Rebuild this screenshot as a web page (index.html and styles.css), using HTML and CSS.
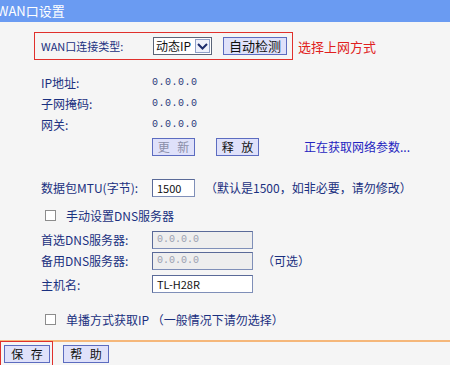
FILE: index.html
```html
<!DOCTYPE html>
<html lang="zh-CN">
<head>
  <meta charset="UTF-8" />
  <title>WAN口设置</title>
  <link rel="stylesheet" href="styles.css">
</head>
<body>
  <div class="title"><span>WAN口设置</span></div>

  <div class="form">
    <div class="type-line">
      <div class="type-box">
        <span class="label type-label">WAN口连接类型:</span>
        <span class="select">
          <span class="select-text">动态IP</span>
          <span class="select-arrow">
            <svg width="11" height="7" viewBox="0 0 11 7"><path d="M1 1 L5.5 5.5 L10 1" fill="none" stroke="#1c2c6c" stroke-width="2"/></svg>
          </span>
        </span>
        <button class="btn btn-detect">自动检测</button>
      </div>
      <span class="hint-red">选择上网方式</span>
    </div>

    <div class="rows">
      <div class="row"><span class="label">IP地址:</span><span class="ip">0.0.0.0</span></div>
      <div class="row"><span class="label">子网掩码:</span><span class="ip">0.0.0.0</span></div>
      <div class="row"><span class="label">网关:</span><span class="ip">0.0.0.0</span></div>
      <div class="row row-btns">
        <span></span>
        <div class="btn-group">
          <button class="btn btn-small disabled">更 新</button>
          <button class="btn btn-small">释 放</button>
          <span class="status">正在获取网络参数...</span>
        </div>
      </div>

      <div class="row row-mtu">
        <span class="label">数据包MTU(字节):</span>
        <div class="field">
          <span class="input input-mtu">1500</span>
          <span class="note">（默认是1500，如非必要，请勿修改）</span>
        </div>
      </div>

      <div class="check-row check-dns">
        <span class="checkbox"></span>
        <span class="label">手动设置DNS服务器</span>
      </div>

      <div class="row row-input">
        <span class="label">首选DNS服务器:</span>
        <span class="input input-wide off">0.0.0.0</span>
      </div>
      <div class="row row-input">
        <span class="label">备用DNS服务器:</span>
        <div class="field">
          <span class="input input-wide off">0.0.0.0</span>
          <span class="note note-opt">（可选）</span>
        </div>
      </div>
      <div class="row row-host">
        <span class="label">主机名:</span>
        <span class="input input-wide">TL-H28R</span>
      </div>

      <div class="check-row check-uni">
        <span class="checkbox"></span>
        <span class="label">单播方式获取IP （一般情况下请勿选择）</span>
      </div>
    </div>
  </div>

  <div class="footer">
    <span class="save-box"><button class="btn btn-foot">保 存</button></span>
    <button class="btn btn-foot">帮 助</button>
  </div>
</body>
</html>
```

FILE: styles.css
```css
body {
  margin: 0;
  background-color: #f5f5f5;
  font-family: "Noto Sans CJK SC", "DejaVu Sans", sans-serif;
  font-size: 12px;
  color: #1a3080;
  width: 450px;
  height: 365px;
  overflow: hidden;
}

.title {
  height: 22px;
  line-height: 22px;
  background-color: #6a9bf2;
  color: #fff;
  font-size: 13px;
  overflow: hidden;
}
.title span {
  margin-left: -3px;
}

.form {
  padding: 10px 0 0 34px;
}

/* connection type line */
.type-line {
  display: flex;
  align-items: center;
}
.type-box {
  box-sizing: border-box;
  width: 259px;
  height: 28px;
  border: 1px solid #e0302c;
  display: flex;
  align-items: center;
  padding-left: 6px;
}
.type-label {
  width: 112px;
  font-size: 11px;
}
.select {
  display: flex;
  align-items: center;
  height: 18px;
  box-sizing: border-box;
  border: 1px solid #5a6478;
  background: #fff;
  color: #111;
  width: 59px;
}
.select-text {
  flex: 1;
  padding-left: 2px;
  line-height: 16px;
}
.select-arrow {
  width: 15px;
  height: 14px;
  margin-right: 1px;
  border: 1px solid #8fa0c8;
  box-sizing: border-box;
  display: flex;
  align-items: center;
  justify-content: center;
  background: #eef1fb;
}
.hint-red {
  color: #e02020;
  margin-left: 5px;
  font-size: 13px;
}

.btn {
  font-family: inherit;
  font-size: 12px;
  background-color: #dfe1fa;
  border: 1px solid #5c6cc0;
  color: #111;
  padding: 0;
  height: 18px;
  line-height: 16px;
  box-sizing: border-box;
  word-spacing: 5px;
}
.btn-detect {
  width: 64px;
  margin-left: 11px;
  font-size: 13px;
}

/* rows */
.rows {
  padding-left: 7px;
  margin-top: 12px;
}
.row {
  display: grid;
  grid-template-columns: 111px auto;
  align-items: center;
  height: 21px;
}
.ip {
  font-family: "Liberation Mono", monospace;
  font-size: 10px;
  letter-spacing: 0.5px;
  color: #2a3a7a;
}
.row-btns {
  height: 23px;
}
.btn-group {
  display: flex;
  align-items: center;
}
.btn-small {
  width: 43px;
  margin-right: 21px;
}
.btn-small.disabled {
  color: #8a8ea8;
}
.status {
  margin-left: 24px;
  color: #2424c0;
}

.row-mtu {
  height: 21px;
  margin-top: 19px;
}
.field {
  display: flex;
  align-items: center;
}
.input {
  box-sizing: border-box;
  height: 18px;
  line-height: 16px;
  border: 1px solid #7f8fb8;
  border-top-color: #5a6a98;
  border-left-color: #5a6a98;
  background: #fff;
  color: #111;
  padding-left: 4px;
  font-size: 11px;
}
.input-mtu {
  width: 43px;
}
.input-wide {
  width: 101px;
}
.input.off {
  background: #eeeeee;
  color: #9aa0b0;
  font-family: "Liberation Mono", monospace;
  font-size: 10px;
}
.note {
  margin-left: 10px;
}
.note-opt {
  margin-left: 9px;
}

.check-row {
  display: flex;
  align-items: center;
  height: 22px;
}
.check-dns {
  margin-top: 6px;
}
.checkbox {
  width: 11px;
  height: 11px;
  border: 1px solid #8c8c8c;
  background: #fff;
  margin-left: 4px;
  margin-right: 10px;
  box-sizing: border-box;
}

.row-input {
  height: 21px;
}
.check-dns + .row-input {
  margin-top: 3px;
}
.row-host {
  height: 22px;
  margin-top: 2px;
}
.check-uni {
  margin-top: 13px;
}

/* bottom bar */
.footer {
  position: absolute;
  top: 340px;
  left: 0;
  right: 0;
  height: 25px;
  border-top: 2px solid #f5b77a;
  display: flex;
  align-items: center;
  box-sizing: border-box;
}
.save-box {
  box-sizing: border-box;
  height: 25px;
  border: 1px solid #e0302c;
  border-bottom: none;
  padding: 0 2px 0 3px;
  display: flex;
  align-items: center;
}
.btn-foot {
  width: 46px;
  height: 18px;
}
.footer > .btn-foot {
  margin-left: 10px;
}
```
